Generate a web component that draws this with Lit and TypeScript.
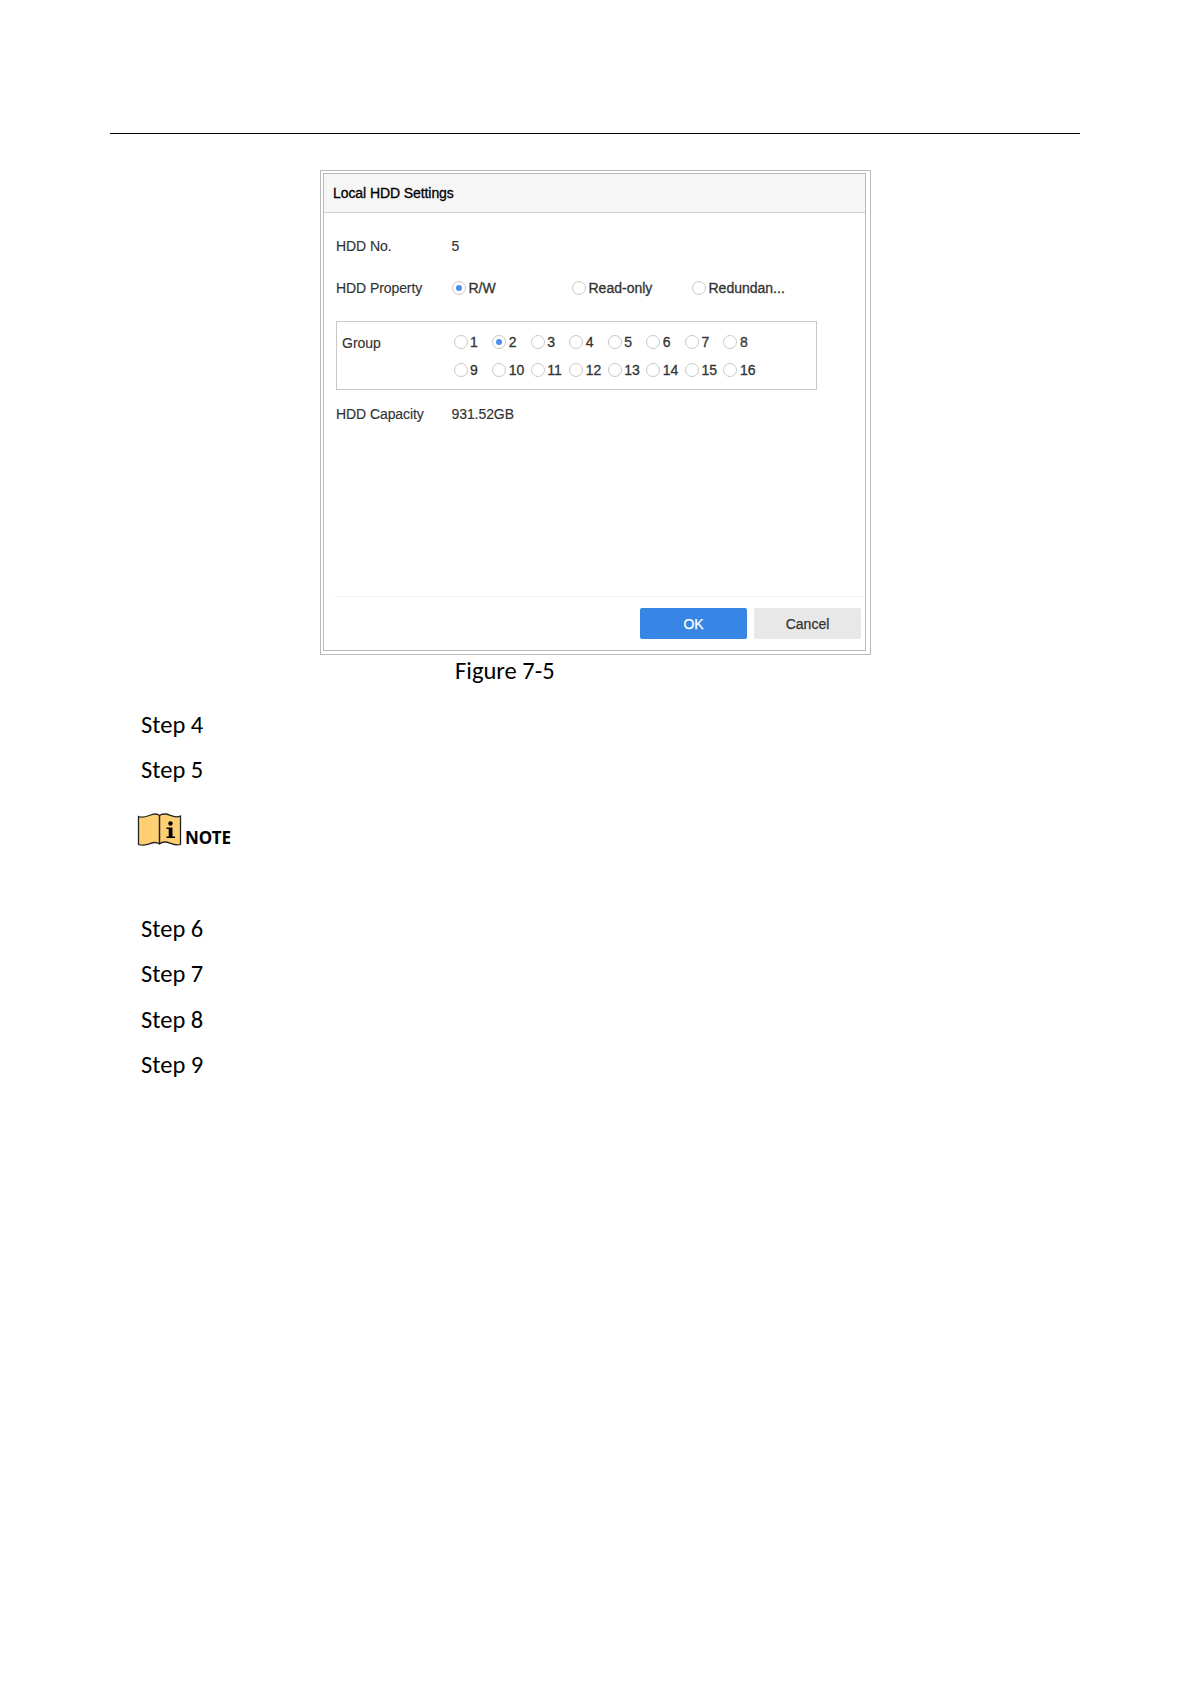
import { LitElement, html, css } from "lit";
import { customElement, property } from "lit/decorators.js";

@customElement("radio-option")
export class RadioOption extends LitElement {
  @property({ type: Boolean }) checked = false;
  @property({ type: String }) label = "";

  static styles = css`
    :host {
      display: flex;
      align-items: center;
      height: 16px;
    }

    .radio__circle {
      display: flex;
      flex: none;
      align-items: center;
      justify-content: center;
      box-sizing: border-box;
      width: 14px;
      height: 14px;
      border: 1px solid #c9c9c9;
      border-radius: 50%;
      background: #fff;
    }

    .radio__dot {
      width: 6px;
      height: 6px;
      border-radius: 50%;
      background: #4f8bee;
    }

    .radio__label {
      padding-left: 2.5px;
      line-height: 16px;
      white-space: nowrap;
      -webkit-text-stroke: 0.3px currentColor;
    }
  `;

  render() {
    return html`
      <span class="radio__circle">
        ${this.checked ? html`<span class="radio__dot"></span>` : ""}
      </span>
      <span class="radio__label">${this.label}</span>
    `;
  }
}

@customElement("hdd-dialog")
export class HddDialog extends LitElement {
  @property({ type: Number }) group = 2;

  static styles = css`
    :host {
      display: block;
      box-sizing: border-box;
      width: 551px;
      height: 485px;
      padding: 2px 4px 3px 2px;
      border: 1px solid #b9b9b9;
      font: 14px/16px "Liberation Sans", Arial, sans-serif;
      color: #333;
    }

    .dialog {
      display: flex;
      flex-direction: column;
      box-sizing: border-box;
      height: 100%;
      border: 1px solid #b9b9b9;
    }

    .dialog__title {
      box-sizing: border-box;
      height: 39px;
      padding: 11px 0 0 9px;
      border-bottom: 1px solid #cfcfcf;
      background: #f6f6f6;
      color: #000;
      letter-spacing: -0.08px;
      -webkit-text-stroke: 0.3px currentColor;
    }

    .dialog__body {
      flex: 1;
      padding: 25px 0 0 12px;
    }

    .dialog__row {
      display: grid;
      grid-template-columns: 115.5px 1fr;
      height: 16px;
      letter-spacing: -0.08px;
      -webkit-text-stroke: 0.15px currentColor;
    }

    .dialog__row--property {
      grid-template-columns: 116px 120px 120px 1fr;
      margin-top: 26px;
    }

    .dialog__row--property radio-option {
      letter-spacing: 0;
    }

    .dialog__row--capacity {
      margin-top: 16px;
    }

    .dialog__group {
      display: grid;
      grid-template-columns: 111.6px 1fr;
      box-sizing: border-box;
      width: 481px;
      height: 69px;
      margin-top: 25px;
      padding: 12px 0 0 5px;
      border: 1px solid #c9c9c9;
    }

    .dialog__group-label {
      padding-top: 1px;
      -webkit-text-stroke: 0.15px currentColor;
    }

    .dialog__options {
      display: grid;
      grid-template-columns: repeat(8, 38.55px);
      grid-auto-rows: 16px;
      row-gap: 12px;
    }

    .dialog__footer {
      display: flex;
      justify-content: flex-end;
      gap: 7px;
      box-sizing: border-box;
      height: 54px;
      margin: 0 1px 0 10px;
      padding: 11px 3px 0 0;
      border-top: 1px solid #f2f2f2;
    }

    .dialog__button {
      width: 107px;
      height: 31px;
      padding: 0;
      border: 0;
      border-radius: 2px;
      background: #e8e8e8;
      color: #333;
      font: inherit;
      -webkit-text-stroke: 0.25px currentColor;
    }

    .dialog__button--primary {
      background: #3786e6;
      color: #fff;
    }
  `;

  render() {
    const groups = Array.from({ length: 16 }, (_, i) => i + 1);
    return html`
      <div class="dialog">
        <div class="dialog__title">Local HDD Settings</div>
        <div class="dialog__body">
          <div class="dialog__row">
            <span>HDD No.</span>
            <span>5</span>
          </div>
          <div class="dialog__row dialog__row--property">
            <span>HDD Property</span>
            <radio-option label="R/W" checked></radio-option>
            <radio-option label="Read-only"></radio-option>
            <radio-option label="Redundan..."></radio-option>
          </div>
          <div class="dialog__group">
            <span class="dialog__group-label">Group</span>
            <div class="dialog__options">
              ${groups.map(
                (n) => html`<radio-option
                  label=${n}
                  ?checked=${n === this.group}
                ></radio-option>`
              )}
            </div>
          </div>
          <div class="dialog__row dialog__row--capacity">
            <span>HDD Capacity</span>
            <span>931.52GB</span>
          </div>
        </div>
        <div class="dialog__footer">
          <button class="dialog__button dialog__button--primary">OK</button>
          <button class="dialog__button">Cancel</button>
        </div>
      </div>
    `;
  }
}

@customElement("app-root")
export class AppRoot extends LitElement {
  static styles = css`
    :host {
      display: block;
      box-sizing: border-box;
      width: 1191px;
      height: 1684px;
      padding: 133px 111px 0 110px;
      background: #fff;
      color: #000;
      font: 24.5px/30px Carlito, Calibri, Lato, sans-serif;
    }

    .page__rule {
      height: 1px;
      background: #000;
    }

    .page__dialog {
      margin: 36px 0 0 210px;
    }

    .page__caption {
      margin: 1px 0 0 345px;
    }

    .steps {
      display: grid;
      grid-auto-rows: 30px;
      row-gap: 15.5px;
      margin-left: 31px;
    }

    .steps--before {
      margin-top: 23.5px;
    }

    .steps--after {
      margin-top: 67px;
    }

    .note {
      display: flex;
      align-items: flex-end;
      height: 35px;
      margin: 26.5px 0 0 27px;
    }

    .note__icon {
      flex: none;
      width: 45px;
      height: 35px;
    }

    .note__text {
      margin-left: 3px;
      font: bold 18px/20px "Noto Sans", sans-serif;
      transform: scaleX(0.945);
      transform-origin: left;
    }
  `;

  private renderSteps(steps: number[]) {
    return steps.map((n) => html`<span>Step ${n}</span>`);
  }

  render() {
    return html`
      <div class="page__rule"></div>
      <hdd-dialog class="page__dialog"></hdd-dialog>
      <div class="page__caption">Figure 7-5</div>
      <div class="steps steps--before">${this.renderSteps([4, 5])}</div>
      <div class="note">
        <svg class="note__icon" viewBox="0 0 45 35">
          <path
            d="M1.5 4.5C8 7 13 2 18 2C20 2 21.5 2.5 22.5 3.5C24 2 26 2 28 2C33 2 37 7 43.5 4V32.5C37 34.5 33 30 28 30C26 30 24 30.5 22.5 32C21 31 20 30.5 18 30.5C13 30.5 8 35 1.5 32.5Z"
            fill="#ffd073"
            stroke="#222"
            stroke-width="1.3"
          />
          <path d="M22.5 3.5V32" stroke="#222" stroke-width="1.5" />
          <circle cx="33.5" cy="11.5" r="2.2" />
          <path d="M29.5 15.5H35.5V24.5H38V26H29.5V24.5H31.7V17H29.5Z" />
        </svg>
        <span class="note__text">NOTE</span>
      </div>
      <div class="steps steps--after">${this.renderSteps([6, 7, 8, 9])}</div>
    `;
  }
}
